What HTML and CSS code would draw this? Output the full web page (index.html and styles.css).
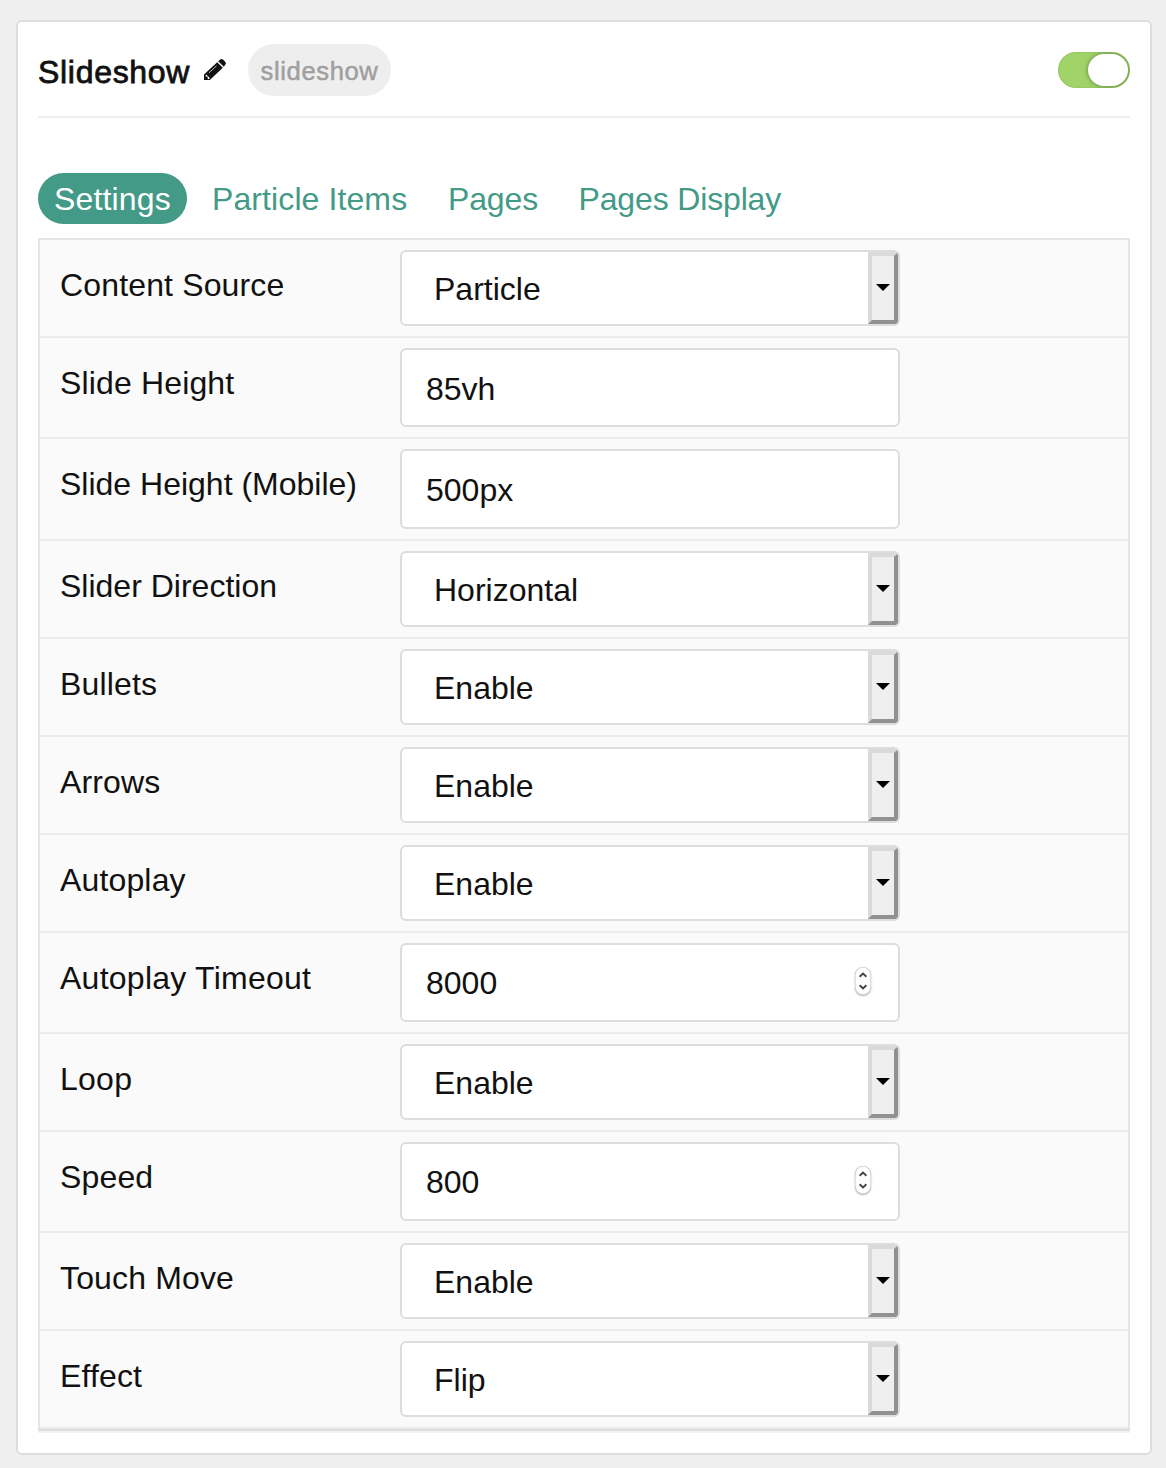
FILE: index.html
```html
<!DOCTYPE html>
<html lang="en">
<head>
<meta charset="utf-8">
<title>Slideshow</title>
<link rel="stylesheet" href="styles.css">
</head>
<body>
<main class="card">
  <header class="card-header">
    <h1 class="title">Slideshow</h1>
    <svg class="pencil" viewBox="0 0 24 24" aria-hidden="true">
      <path fill="#111" d="M1 16.4 14.2 4.2 19.8 9.8 6.8 22H1z"/>
      <path fill="#111" d="M15.2 3.2 17.2 1.4Q18.6.4 20 1.5L22.4 4Q23.4 5.3 22.4 6.6L20.8 8.8z"/>
      <path fill="#fff" d="M3.2 16.6 7 20.2 5.4 21.2 4.6 20.4V18.6H2.6V17.6z"/>
      <path stroke="#bbb" stroke-width="1" d="M6 14.8 13.6 7.8"/>
    </svg>
    <span class="badge">slideshow</span>
    <span class="toggle"><span class="knob"></span></span>
  </header>
  <nav class="tabs">
    <a class="tab active">Settings</a>
    <a class="tab items">Particle Items</a>
    <a class="tab pages">Pages</a>
    <a class="tab display">Pages Display</a>
  </nav>
  <section class="panel">
    <div class="row"><label class="label">Content Source</label><div class="field select">Particle<span class="drop"></span></div></div>
    <div class="row"><label class="label">Slide Height</label><div class="field input">85vh</div></div>
    <div class="row"><label class="label tight">Slide Height (Mobile)</label><div class="field input">500px</div></div>
    <div class="row"><label class="label tight">Slider Direction</label><div class="field select">Horizontal<span class="drop"></span></div></div>
    <div class="row"><label class="label">Bullets</label><div class="field select">Enable<span class="drop"></span></div></div>
    <div class="row"><label class="label">Arrows</label><div class="field select">Enable<span class="drop"></span></div></div>
    <div class="row"><label class="label">Autoplay</label><div class="field select">Enable<span class="drop"></span></div></div>
    <div class="row"><label class="label wide">Autoplay Timeout</label><div class="field input number">8000<svg class="spin" viewBox="0 0 16 28"><path d="M4.6 9.8 8 6.6 11.4 9.8M4.6 18.2 8 21.4 11.4 18.2"/></svg></div></div>
    <div class="row"><label class="label wide">Loop</label><div class="field select">Enable<span class="drop"></span></div></div>
    <div class="row"><label class="label">Speed</label><div class="field input number">800<svg class="spin" viewBox="0 0 16 28"><path d="M4.6 9.8 8 6.6 11.4 9.8M4.6 18.2 8 21.4 11.4 18.2"/></svg></div></div>
    <div class="row"><label class="label">Touch Move</label><div class="field select">Enable<span class="drop"></span></div></div>
    <div class="row"><label class="label">Effect</label><div class="field select">Flip<span class="drop"></span></div></div>
  </section>
</main>
</body>
</html>
```
FILE: styles.css
```css
* { box-sizing: border-box; }
body {
  margin: 0;
  padding: 20px 14px 13px 16px;
  background: #efefef;
  color: #111;
  font: 32px/38px "Liberation Sans", Arial, sans-serif;
}
.card {
  height: 1435px;
  padding: 0 20px;
  background: #fff;
  border: 2px solid #ddd;
  border-radius: 6px;
}
.card-header {
  display: flex;
  align-items: center;
  height: 96px;
  border-bottom: 2px solid #eee;
}
.title {
  width: 165px;
  margin: 6px 0 0;
  font-size: 32px;
  font-weight: 400;
  letter-spacing: 0.7px;
  -webkit-text-stroke: 0.8px #111;
}
.pencil { width: 24px; height: 24px; margin-top: 2px; }
.badge {
  width: 143px;
  height: 52px;
  margin: 1px 0 0 21px;
  border-radius: 26px;
  background: #eee;
  color: #9f9f9f;
  font-size: 25.6px;
  line-height: 54px;
  letter-spacing: 0.6px;
  text-align: center;
  -webkit-text-stroke: 0.5px #9f9f9f;
}
.toggle {
  display: flex;
  justify-content: flex-end;
  width: 72px;
  height: 36px;
  margin: 1px 0 0 auto;
  padding: 2px;
  border-radius: 18px;
  background: #a0d468;
  overflow: hidden;
  box-shadow: inset 0 0 2px rgba(0, 0, 0, 0.18);
}
.knob {
  width: 40px;
  height: 32px;
  border-radius: 16px;
  background: #fff;
  box-shadow: 0 0 5px rgba(0, 0, 0, 0.42);
}
.tabs {
  display: flex;
  height: 120px;
  padding-top: 55px;
}
.tab {
  height: 51px;
  padding: 0 16px;
  margin-right: 9px;
  border-radius: 25.5px;
  color: #439a86;
  line-height: 53px;
  white-space: nowrap;
}
.tab.active {
  width: 149px;
  background: #439a86;
  color: #fff;
  letter-spacing: 0.15px;
}
.tab.items { width: 227px; letter-spacing: 0.1px; }
.tab.pages { width: 121.5px; letter-spacing: -0.15px; }
.tab.display { letter-spacing: -0.15px; }
.panel {
  background: #fafafa;
  border: 2px solid #e5e5e5;
  border-bottom-color: #ddd;
  box-shadow: 0 2px #f3f3f3;
}
.row {
  display: flex;
  padding: 10px 20px;
  border-bottom: 2px solid #ebebeb;
}
.label {
  width: 340px;
  padding-top: 16px;
  letter-spacing: 0.15px;
}
.label.tight { letter-spacing: 0; }
.label.wide { letter-spacing: 0.25px; }
.field {
  display: flex;
  align-items: center;
  width: 500px;
  background: #fff;
  border: 2px solid #ddd;
  border-radius: 6px;
}
.select { height: 76px; padding: 2px 0 0 32px; }
.input { height: 79.3px; padding: 3px 27px 0 24px; }
.input.number { padding-top: 1.5px; }
.drop {
  display: flex;
  align-items: center;
  justify-content: center;
  width: 30px;
  height: 72px;
  margin: -2px 0 0 auto;
  background: #efefef;
  border: 4px solid;
  border-color: #dadada #919191 #919191 #dadada;
  border-radius: 0 4px 4px 0;
}
.drop::before {
  content: "";
  margin-top: -1px;
  border: 7px solid transparent;
  border-top-color: #000;
  border-bottom: 0;
}
.spin {
  width: 16px;
  height: 28px;
  margin: -4px 0 0 auto;
  border-radius: 8px;
  background: #fff;
  box-shadow: inset 0 0 1px 0.5px rgba(0, 0, 0, 0.25), 0 1px 2px rgba(0, 0, 0, 0.3);
  fill: none;
  stroke: #444;
  stroke-width: 1.9px;
}
```
